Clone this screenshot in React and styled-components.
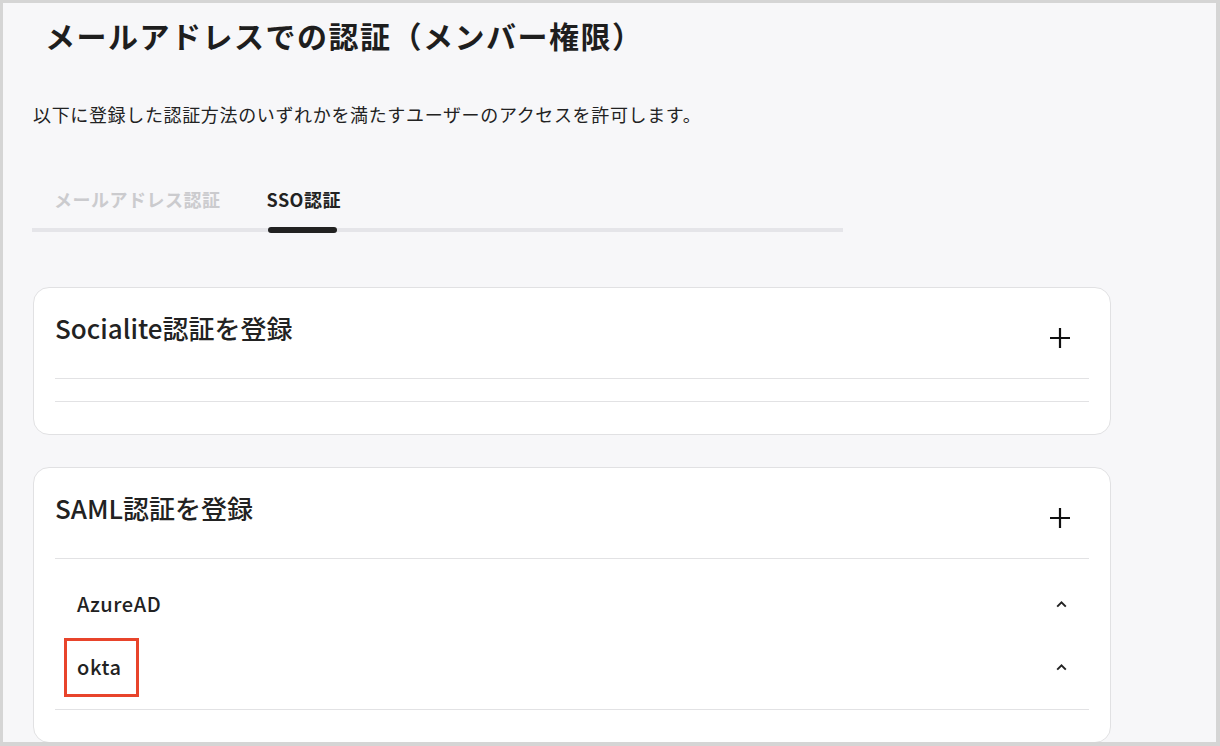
import React from 'react'
import styled, { createGlobalStyle } from 'styled-components'

const GlobalStyle = createGlobalStyle`
  html, body {
    margin: 0;
    padding: 0;
    background: #f7f7f9;
  }
  body {
    font-family: "Noto Sans CJK JP", "Noto Sans", sans-serif;
    color: #222;
  }
`;

const providers = {
  socialite: [],
  saml: [
    { id: 'azure', name: 'AzureAD' },
    { id: 'okta', name: 'okta', marked: true },
  ],
};

function PlusIcon() {
  return (
    <svg width="22" height="22" viewBox="0 0 22 22" fill="none">
      <path d="M11 1v20M1 11h20" stroke="#111" strokeWidth="2.2" />
    </svg>
  )
}

function ChevronUp() {
  return (
    <svg width="11" height="8" viewBox="0 0 11 8" fill="none">
      <path d="M1.2 6.6L5.5 2.4l4.3 4.2" stroke="#222" strokeWidth="2" />
    </svg>
  )
}

function ProviderCard({ title, items }) {
  return (
    <Card>
      <CardHeader>
        <CardTitle>{title}</CardTitle>
        <AddButton aria-label="追加"><PlusIcon /></AddButton>
      </CardHeader>
      <ItemList>
        {items.map((item) => (
          <Item key={item.id}>
            <ItemName $marked={item.marked}>{item.name}</ItemName>
            <ChevronUp />
          </Item>
        ))}
      </ItemList>
    </Card>
  )
}

export default function App() {
  return (
    <>
      <GlobalStyle />
      <Frame>
        <Page>
          <Title>メールアドレスでの認証（メンバー権限）</Title>
          <Description>以下に登録した認証方法のいずれかを満たすユーザーのアクセスを許可します。</Description>
          <TabList>
            <Tab>メールアドレス認証</Tab>
            <Tab $active>SSO認証</Tab>
          </TabList>
          <Cards>
            <ProviderCard title="Socialite認証を登録" items={providers.socialite} />
            <ProviderCard title="SAML認証を登録" items={providers.saml} />
          </Cards>
        </Page>
      </Frame>
    </>
  )
}

const Frame = styled.div`
  box-sizing: border-box;
  width: 1220px;
  height: 746px;
  border: 3px solid #d5d5d5;
  border-right-width: 4px;
  border-bottom-width: 4px;
  background: #f7f7f9;
  overflow: hidden;
`;

const Page = styled.div`
  display: flex;
  flex-direction: column;
  padding: 12px 0 0 29px;
  width: 1079px;
`;

const Title = styled.h1`
  margin: 0 0 0 13px;
  font-size: 30px;
  line-height: 40px;
  font-weight: 700;
  letter-spacing: 0.05em;
  color: #1e1e1e;
`;

const Description = styled.p`
  margin: 46px 0 0 1px;
  font-size: 18px;
  line-height: 26px;
  font-weight: 400;
  letter-spacing: 0.65px;
  color: #222;
`;

const TabList = styled.div`
  display: flex;
  gap: 46px;
  margin-top: 59px;
  padding-left: 22px;
  width: 789px;
  border-bottom: 4px solid #e5e5e9;
`;

const Tab = styled.button`
  position: relative;
  padding: 0 0 16px;
  border: 0;
  background: none;
  font-family: inherit;
  font-size: 18px;
  line-height: 26px;
  font-weight: 700;
  letter-spacing: 0.5px;
  color: ${(p) => (p.$active ? '#222' : '#cbcbce')};
  cursor: pointer;

  &::after {
    content: '';
    display: ${(p) => (p.$active ? 'block' : 'none')};
    position: absolute;
    left: 1px;
    right: 4px;
    bottom: -5px;
    height: 6px;
    border-radius: 3px;
    background: #222;
  }
`;

const Cards = styled.div`
  display: flex;
  flex-direction: column;
  gap: 32px;
  margin-top: 55px;
  margin-left: 1px;
`;

const Card = styled.section`
  padding: 22px 21px 32px;
  background: #fff;
  border: 1px solid #e1e1e3;
  border-radius: 16px;
`;

const CardHeader = styled.div`
  display: flex;
  align-items: flex-start;
  justify-content: space-between;
`;

const CardTitle = styled.h2`
  margin: 0;
  font-size: 26px;
  line-height: 36px;
  font-weight: 500;
  color: #222;
`;

const AddButton = styled.button`
  display: flex;
  align-items: center;
  justify-content: center;
  width: 40px;
  height: 40px;
  margin: 8px 9px 0 0;
  padding: 0;
  border: 0;
  background: none;
  cursor: pointer;
`;

const ItemList = styled.div`
  display: flex;
  flex-direction: column;
  min-height: 22px;
  margin-top: 20px;
  padding: 0;
  border-top: 1px solid #e2e2e4;
  border-bottom: 1px solid #e2e2e4;

  &:not(:empty) {
    padding: 13px 0 11px;
  }
`;

const Item = styled.div`
  display: flex;
  align-items: center;
  justify-content: space-between;
  height: 63px;
  padding: 0 22px;
`;

const ItemName = styled.span`
  position: relative;
  font-size: 20px;
  line-height: 28px;
  font-weight: 500;
  letter-spacing: 0.6px;
  color: #222;

  &::after {
    content: '';
    display: ${(p) => (p.$marked ? 'block' : 'none')};
    position: absolute;
    inset: -15px -17px -16px -13px;
    border: 3px solid #e8442b;
  }
`;
